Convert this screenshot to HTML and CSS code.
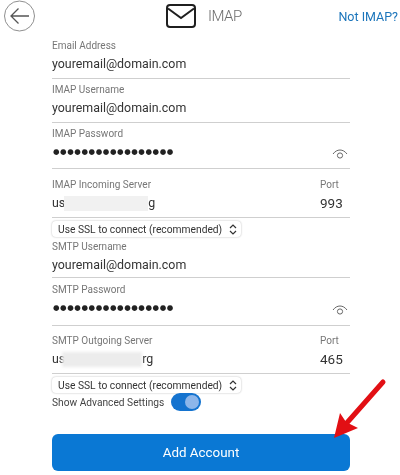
FILE: index.html
```html
<!DOCTYPE html>
<html lang="en">
<head>
<meta charset="utf-8">
<title>IMAP</title>
<link rel="stylesheet" href="styles.css">
</head>
<body>
<div class="page">
  <header class="header">
    <button class="back" aria-label="Back">
      <svg width="31" height="32" viewBox="0 0 31 32"><circle cx="15.500" cy="16" r="15" fill="none" stroke="#8f8f8f" stroke-width="1"/><path d="M25 16H7M14.500 8.500L7 16l7.500 7.500" fill="none" stroke="#555" stroke-width="1.300"/></svg>
    </button>
    <div class="title">
      <svg width="30" height="24" viewBox="0 0 30 24"><rect x="1" y="1" width="28" height="22" rx="3" fill="none" stroke="#1f1f1f" stroke-width="2"/><path d="M2 4.500L15 14 28 4.500" fill="none" stroke="#1f1f1f" stroke-width="2"/></svg>
      <span>IMAP</span>
    </div>
    <a class="not-imap">Not IMAP?</a>
  </header>

  <main class="form">
    <div class="field f-email"><label>Email Address</label><div class="value">youremail@domain.com</div></div>
    <div class="field f-user"><label>IMAP Username</label><div class="value">youremail@domain.com</div></div>
    <div class="field f-pass"><label>IMAP Password</label><div class="value dots-row"><span class="dots">●●●●●●●●●●●●●●●●●</span><svg class="eye" width="16" height="11" viewBox="0 0 16 11"><path d="M1 5C3 2.400 5.300 1 8 1s5 1.400 7 4" fill="none" stroke="#666" stroke-width="1"/><circle cx="8" cy="6.500" r="2.600" fill="none" stroke="#666" stroke-width="1"/></svg></div></div>
    <div class="field f-server">
      <div class="split"><label>IMAP Incoming Server</label><label class="port">Port</label></div>
      <div class="split value"><span>us<i class="redact r1"></i>g</span><span class="port port-num">993</span></div>
    </div>
    <div class="select"><span>Use SSL to connect (recommended)</span><svg width="8" height="11" viewBox="0 0 8 11"><path d="M1 4l3-3 3 3M1 7l3 3 3-3" fill="none" stroke="#333" stroke-width="1.200"/></svg></div>
    <div class="field f-suser"><label>SMTP Username</label><div class="value">youremail@domain.com</div></div>
    <div class="field f-pass f-spass"><label>SMTP Password</label><div class="value dots-row"><span class="dots">●●●●●●●●●●●●●●●●●</span><svg class="eye" width="16" height="11" viewBox="0 0 16 11"><path d="M1 5C3 2.400 5.300 1 8 1s5 1.400 7 4" fill="none" stroke="#666" stroke-width="1"/><circle cx="8" cy="6.500" r="2.600" fill="none" stroke="#666" stroke-width="1"/></svg></div></div>
    <div class="field f-server f-sserver">
      <div class="split"><label>SMTP Outgoing Server</label><label class="port">Port</label></div>
      <div class="split value"><span>us<i class="redact r2"></i>rg</span><span class="port port-num">465</span></div>
    </div>
    <div class="select"><span>Use SSL to connect (recommended)</span><svg width="8" height="11" viewBox="0 0 8 11"><path d="M1 4l3-3 3 3M1 7l3 3 3-3" fill="none" stroke="#333" stroke-width="1.200"/></svg></div>
    <div class="advanced"><span>Show Advanced Settings</span><span class="toggle"><span class="knob"></span></span></div>
    <button class="submit">Add Account</button>
  </main>

  <svg class="arrow" width="60" height="66" viewBox="0 0 60 66"><path d="M50 4L12 47" fill="none" stroke="#e20f14" stroke-width="5" stroke-linecap="round"/><path d="M1 60L7 35 13 44 25 50z" fill="#e20f14"/></svg>
</div>
</body>
</html>
```

FILE: styles.css
```css
* { box-sizing: border-box; }
html, body { margin: 0; padding: 0; background: #fff; }
body { font-family: Roboto, "Liberation Sans", sans-serif; color: #2b2b2b; }
.page { position: relative; width: 400px; height: 475px; overflow: hidden; filter: blur(0.3px); }

.header { display: flex; align-items: center; height: 32px; padding-left: 4px; }
.back { width: 31px; height: 32px; padding: 0; border: 0; background: none; display: block; }
.title { display: flex; align-items: center; gap: 12px; margin-left: 131px; color: #6d6d6d; font-size: 15px; font-weight: 300; letter-spacing: -0.500px; }
.not-imap { margin-left: auto; margin-right: 2px; color: #1b75bb; font-size: 12.500px; font-weight: 400; }

.form { display: flex; flex-direction: column; width: 298px; margin-left: 52px; padding-top: 7px; }
.field { display: flex; flex-direction: column; border-bottom: 1px solid #cfcfcf; padding-top: 4px; }
label { display: block; color: #767676; font-size: 10px; line-height: 13px; white-space: nowrap; }
.value { font-size: 12.400px; line-height: 20px; margin-top: 2px; color: #333; }
.f-email { height: 40px; padding-top: 0; }
.f-user { height: 44px; }
.f-pass { height: 46px; }
.f-server { height: 49px; padding-top: 9px; }
.f-suser { height: 40px; padding-top: 2px; margin-top: 1px; }
.f-spass { height: 48px; padding-top: 5px; }
.f-sserver { height: 48px; padding-top: 8px; }
.dots-row { display: flex; justify-content: space-between; align-items: center; }
.dots { font-size: 7.500px; letter-spacing: 0.570px; color: #222; font-family: "DejaVu Sans", sans-serif; margin-left: 1px; line-height: 20px; }
.eye { margin: 4px 2px 0 0; }
.split { display: flex; justify-content: space-between; }
.port { width: 30px; }
.port-num { font-size: 13.500px; }
.redact { display: inline-block; width: 84px; height: 15px; vertical-align: middle; background: #f1f1f1; filter: blur(0.6px); margin: 0 0 0 -1px; }
.r2 { width: 80px; background: #ececec; filter: blur(1.500px); margin-left: -3px; }

.select { display: flex; align-items: center; justify-content: space-between; width: 189px; height: 16px; margin-top: 3px; padding: 0 4px 0 6px; border-radius: 4px; background: #fff; box-shadow: 0 0 2px rgba(0,0,0,.3); font-size: 10.250px; color: #333; white-space: nowrap; }
.advanced { display: flex; align-items: center; gap: 7px; height: 18px; font-size: 10.200px; color: #444; white-space: nowrap; }
.toggle { display: flex; align-items: center; justify-content: flex-end; width: 30px; height: 18px; padding: 2px; border-radius: 9px; background: #1473cf; }
.knob { width: 14px; height: 14px; border-radius: 50%; background: #8db6ea; }
.submit { display: block; width: 298px; height: 37px; margin-top: 23px; border: 0; border-radius: 6px; background: #0a78d4; color: #fff; font: 400 13.400px Roboto, "Liberation Sans", sans-serif; }

.arrow { position: absolute; left: 333px; top: 378px; }
```
